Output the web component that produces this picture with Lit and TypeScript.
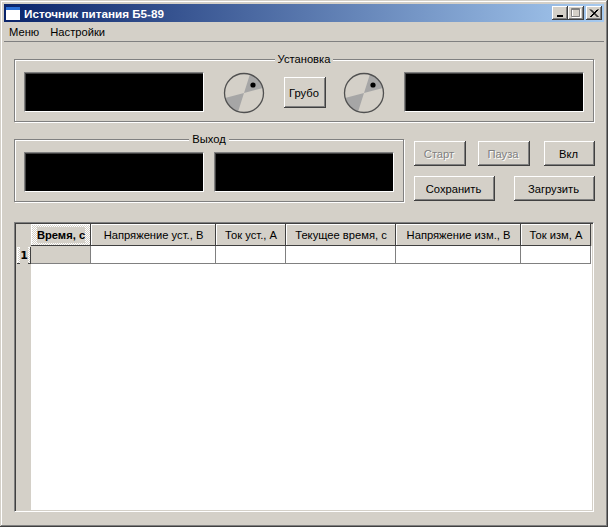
import { LitElement, html, css } from "lit";
import { customElement } from "lit/decorators.js";

const dial = html`<svg class="dial" width="42" height="42" viewBox="0 0 42 42">
  <circle cx="21" cy="21" r="19.5" fill="#d4d0c8"/>
  <path d="M21 21 L27 2 A19.5 19.5 0 0 1 40 16 Z M21 21 L15 40 A19.5 19.5 0 0 1 2 26 Z" fill="#a6a6a6"/>
  <circle cx="21" cy="21" r="19.5" fill="none" stroke="#505050" stroke-width="1.3"/>
  <circle cx="30" cy="13" r="2.6" fill="#000"/>
</svg>`;

const headers = ["Время, с", "Напряжение уст., В", "Ток уст., А", "Текущее время, с", "Напряжение изм., В", "Ток изм, А"];

@customElement("app-root")
export class AppRoot extends LitElement {
  static styles = css`
    :host { display: block; width: 608px; height: 527px; font: 11.2px "Liberation Sans", Arial, sans-serif; color: #000; }
    * { box-sizing: border-box; }
    .win { width: 608px; height: 527px; padding: 4px; background: #d4d0c8; display: flex; flex-direction: column;
      box-shadow: inset -1px -1px #404040, inset 1px 1px #d4d0c8, inset -2px -2px #808080, inset 2px 2px #fff; }
    .title { height: 18px; flex: none; display: flex; align-items: center; padding: 0 2px; color: #fff; font-weight: bold; font-size: 11.7px;
      background: linear-gradient(90deg, #0a246a, #a6caf0); }
    .app-ico { margin-right: 4px; flex: none; }
    .title span { flex: 1; }
    .wb { width: 16px; height: 14px; background: #d4d0c8; flex: none; display: flex; align-items: center; justify-content: center;
      box-shadow: inset -1px -1px #404040, inset 1px 1px #fff, inset -2px -2px #808080; }
    .wb.close { margin-left: 2px; }
    .menu { height: 19px; flex: none; display: flex; align-items: center; padding-left: 5px; gap: 11px; }
    .sep { height: 2px; flex: none; background: #808080; border-bottom: 1px solid #d4d0c8; }
    .content { flex: 1; padding: 16px 10px 15px; display: flex; flex-direction: column; }
    .group { position: relative; height: 63px; padding: 12px 9px 0; display: flex; align-items: flex-start; border: 1px solid #808080;
      box-shadow: inset 1px 1px #fff, 1px 1px #fff; }
    .legend { position: absolute; top: -8px; left: 0; right: 0; display: flex; justify-content: center; }
    .legend span { background: #d4d0c8; padding: 0 3px; line-height: 14px; }
    .display { width: 180px; height: 40px; flex: none; background: #000; border: 1px solid; border-color: #808080 #fff #fff #808080;
      box-shadow: inset 1px 1px #404040; }
    .set { gap: 20px; }
    .set .dial { margin: 0 -1px; flex: none; }
    .btn { height: 25px; display: flex; align-items: center; justify-content: center; background: #d4d0c8; flex: none; padding-right: 2px;
      box-shadow: inset -1px -1px #404040, inset 1px 1px #fff, inset -2px -2px #808080; }
    .coarse { width: 42px; height: 31px; margin: 5px -2px 0 0; }
    .off { color: #808080; text-shadow: 1px 1px #fff; }
    .row2 { display: flex; margin-top: 17px; gap: 10px; }
    .row2 .group { width: 390px; gap: 10px; flex: none; }
    .ctrl { width: 181px; padding-top: 2px; display: flex; flex-direction: column; gap: 10px; }
    .ctrl div.line { display: flex; }
    .w52 { width: 52px; } .w51 { width: 51px; } .w81 { width: 81px; }
    .l1 { gap: 12px; } .l1 .w51 { margin-left: 2px; }
    .l2 { justify-content: space-between; }
    .table { margin-top: 20px; height: 290px; display: flex; flex-direction: column; background: #fff; border: 1px solid; border-color: #808080 #fff #fff #808080;
      box-shadow: inset 1px 1px #404040, inset -1px -1px #d4d0c8; padding: 1px; }
    .grid { display: grid; grid-template-columns: 15px 60px 125px 70px 110px 125px 70px 1fr; grid-template-rows: 22px 18px; flex: none; }
    .g { background: #d4d0c8; }
    .th { background: #d4d0c8; display: flex; align-items: center; justify-content: center; white-space: nowrap;
      box-shadow: inset -1px -1px #404040, inset 1px 1px #fff; }
    .focus { font-weight: bold; background: repeating-conic-gradient(#fff 0 25%, #d4d0c8 0 50%) 0 0 / 2px 2px; }
    .focus b { background: #d4d0c8; padding: 2px 0; }
    .rhc { background: #d4d0c8; padding: 1px 0 0 1px; display: flex; }
    .rh { flex: 1; font-family: "DejaVu Sans", sans-serif; font-size: 11px; }
    .td { background: #fff; border-right: 1px solid #808080; border-bottom: 1px solid #808080; }
    .td.g { background: #d4d0c8; }
    .blank { background: #fff; }
    .fill { flex: 1; display: flex; }
    .gut { width: 15px; background: #d4d0c8; }
  `;

  render() {
    return html`<div class="win">
      <div class="title">
        <svg class="app-ico" width="14" height="13" viewBox="0 0 14 13"><rect width="14" height="13" fill="#fff"/><rect width="14" height="3" fill="#2a6fd6"/></svg>
        <span>Источник питания Б5-89</span>
        <div class="wb"><svg width="10" height="10" viewBox="0 0 10 10"><rect x="2" y="7" width="6" height="2" fill="#000"/></svg></div>
        <div class="wb"><svg width="12" height="10" viewBox="0 0 12 10"><rect x="2.5" y="1.5" width="8" height="8" fill="none" stroke="#fff"/><path d="M1.5 .5h8v8h-8z M1.5 1.5h8" fill="none" stroke="#808080"/></svg></div>
        <div class="wb close"><svg width="10" height="10" viewBox="0 0 10 10"><path d="M1 1.5 L8.5 9 M8.5 1.5 L1 9 M2 1.5 L9.5 9 M9.5 1.5 L2 9" stroke="#000" stroke-width="1" fill="none"/></svg></div>
      </div>
      <div class="menu"><span>Меню</span><span>Настройки</span></div>
      <div class="sep"></div>
      <div class="content">
        <div class="group set">
          <div class="legend"><span>Установка</span></div>
          <div class="display"></div>
          ${dial}
          <div class="btn coarse">Грубо</div>
          ${dial}
          <div class="display"></div>
        </div>
        <div class="row2">
          <div class="group">
            <div class="legend"><span>Выход</span></div>
            <div class="display"></div>
            <div class="display"></div>
          </div>
          <div class="ctrl">
            <div class="line l1">
              <div class="btn w52 off">Старт</div>
              <div class="btn w52 off">Пауза</div>
              <div class="btn w51">Вкл</div>
            </div>
            <div class="line l2">
              <div class="btn w81">Сохранить</div>
              <div class="btn w81">Загрузить</div>
            </div>
          </div>
        </div>
        <div class="table">
          <div class="grid">
            <div class="g"></div>
            ${headers.map((h, i) => i === 0 ? html`<div class="th focus"><b>${h}</b></div>` : html`<div class="th">${h}</div>`)}
            <div class="g"></div>
            <div class="rhc"><div class="th focus rh"><b>1</b></div></div>
            <div class="td g"></div>
            <div class="td"></div><div class="td"></div><div class="td"></div><div class="td"></div><div class="td"></div>
            <div class="blank"></div>
          </div>
          <div class="fill"><div class="gut"></div></div>
        </div>
      </div>
    </div>`;
  }
}
